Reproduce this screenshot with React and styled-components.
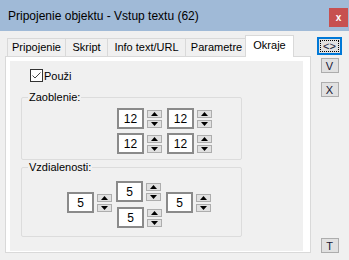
import React from "react";
import styled, { createGlobalStyle } from "styled-components";

const GlobalStyle = createGlobalStyle`
  html, body {
    margin: 0;
    padding: 0;
    background: #f0f0f0;
  }
  body {
    font-family: "Liberation Sans", Arial, sans-serif;
    font-size: 11px;
    color: #000;
  }
`;

const Window = styled.div`
  width: 349px;
  height: 260px;
  background: #f0f0f0;
  display: flex;
  flex-direction: column;
  overflow: hidden;
`;

const TitleBar = styled.div`
  height: 31px;
  flex-shrink: 0;
  background: #a0bad7;
  display: flex;
  align-items: flex-start;
`;

const Title = styled.div`
  flex: 1;
  padding: 9px 0 0 8px;
  font-size: 12px;
  line-height: 14px;
  color: #000;
`;

const CloseButton = styled.div`
  width: 19px;
  height: 19px;
  margin: 8px 1px 0 0;
  background: #c75050;
  color: #fff;
  font-weight: bold;
  font-size: 10px;
  display: flex;
  align-items: center;
  justify-content: center;
`;

const Body = styled.div`
  flex: 1;
  display: flex;
  padding: 5px 0 7px 5px;
`;

const TabControl = styled.div`
  width: 306px;
  display: flex;
  flex-direction: column;
`;

const TabStrip = styled.div`
  height: 21px;
  display: flex;
  align-items: flex-end;
  padding-left: 2px;
  margin-bottom: -1px;
  position: relative;
  z-index: 1;
`;

const Tab = styled.div`
  box-sizing: border-box;
  width: ${p => p.$w}px;
  height: ${p => (p.$active ? 22 : 19)}px;
  margin-left: ${p => (p.$active ? -2 : 0)}px;
  margin-right: -1px;
  padding-bottom: ${p => (p.$active ? 3 : 1)}px;
  border: 1px solid #d9d9d9;
  border-bottom: ${p => (p.$active ? "none" : "1px solid #d9d9d9")};
  background: ${p => (p.$active ? "#fff" : "#f0f0f0")};
  display: flex;
  align-items: center;
  justify-content: center;
  white-space: nowrap;
  position: relative;
  z-index: ${p => (p.$active ? 2 : 1)};
`;

const Panel = styled.div`
  flex: 1;
  border: 1px solid #d9d9d9;
  background: #fff;
  padding: 4px 7px 1px 4px;
  display: flex;
`;

const Page = styled.div`
  flex: 1;
  background: #f0f0f0;
  padding: 8px 0 0 11px;
  display: flex;
  flex-direction: column;
`;

const CheckRow = styled.label`
  display: flex;
  align-items: center;
  gap: 1px;
  margin-left: 9px;
  height: 13px;
`;

const CheckBox = styled.span`
  box-sizing: border-box;
  width: 13px;
  height: 13px;
  border: 1px solid #333;
  background: #fff;
  display: flex;
  align-items: center;
  justify-content: center;
`;

const Group = styled.fieldset`
  box-sizing: border-box;
  width: 221px;
  margin: ${p => p.$top}px 0 0 0;
  padding: 0;
  min-width: 0;
  border: 1px solid #dcdcdc;
  border-radius: 2px;
`;

const Legend = styled.legend`
  margin-left: 6px;
  padding: 0 1px;
  line-height: 14px;
  font-size: 11px;
`;

const CornerGrid = styled.div`
  display: grid;
  grid-template-columns: auto auto;
  justify-content: start;
  column-gap: 5px;
  row-gap: 4px;
  padding: 4px 0 5px 95px;
`;

const DistanceRow = styled.div`
  display: flex;
  align-items: flex-start;
  gap: 4px;
  padding: 7px 0 8px 45px;
`;

const SideCell = styled.div`
  margin-top: 11px;
`;

const MiddleColumn = styled.div`
  display: flex;
  flex-direction: column;
  gap: 5px;
`;

const SpinWrap = styled.div`
  display: flex;
  align-items: center;
  gap: 3px;
  margin-left: ${p => p.$shift || 0}px;
`;

const NumberBox = styled.div`
  box-sizing: border-box;
  width: 27px;
  height: 21px;
  border: 2px solid #8a8a8a;
  background: #fff;
  display: flex;
  align-items: center;
  justify-content: center;
  font-size: 12px;
`;

const SpinButtons = styled.div`
  display: flex;
  flex-direction: column;
  gap: 2px;
`;

const SpinButton = styled.div`
  box-sizing: border-box;
  width: 15px;
  height: 8px;
  border: 1px solid #adadad;
  background: #e1e1e1;
  display: flex;
  align-items: center;
  justify-content: center;
`;

const SideBar = styled.div`
  width: 25px;
  margin-left: 6px;
  padding-top: 1px;
  display: flex;
  flex-direction: column;
  align-items: center;
`;

const SideButton = styled.div`
  box-sizing: border-box;
  width: ${p => (p.$focused ? 25 : 18)}px;
  height: ${p => (p.$focused ? 18 : 15)}px;
  margin-top: ${p => p.$gap || 0}px;
  border: ${p => (p.$focused ? "2px solid #0078d7" : "1px solid #adadad")};
  background: #e1e1e1;
  display: flex;
  align-items: center;
  justify-content: center;
  font-size: 11px;
  color: #141432;
`;

const FocusRing = styled.span`
  box-sizing: border-box;
  width: 19px;
  height: 12px;
  border: 1px dotted #000;
  display: flex;
  align-items: center;
  justify-content: center;
  line-height: 10px;
`;

const Spacer = styled.div`
  flex: 1;
`;

function Arrow({ down }) {
  return (
    <svg width="7" height="4" viewBox="0 0 7 4">
      <polygon points={down ? "0,0 7,0 3.5,4" : "0,4 7,4 3.5,0"} fill="#000" />
    </svg>
  );
}

function Spinner({ value, shift }) {
  return (
    <SpinWrap $shift={shift}>
      <NumberBox>{value}</NumberBox>
      <SpinButtons>
        <SpinButton><Arrow /></SpinButton>
        <SpinButton><Arrow down /></SpinButton>
      </SpinButtons>
    </SpinWrap>
  );
}

const tabs = [
  { label: "Pripojenie", w: 59 },
  { label: "Skript", w: 43 },
  { label: "Info text/URL", w: 79 },
  { label: "Parametre", w: 63 },
  { label: "Okraje", w: 49, active: true },
];

export default function App() {
  return (
    <>
      <GlobalStyle />
      <Window>
        <TitleBar>
          <Title>Pripojenie objektu - Vstup textu (62)</Title>
          <CloseButton>x</CloseButton>
        </TitleBar>
        <Body>
          <TabControl>
            <TabStrip>
              {tabs.map(t => (
                <Tab key={t.label} $w={t.w} $active={t.active}>{t.label}</Tab>
              ))}
            </TabStrip>
            <Panel>
              <Page>
                <CheckRow>
                  <CheckBox>
                    <svg width="11" height="11" viewBox="0 0 11 11">
                      <polyline points="1.5,5.5 4,8 9.5,2.5" fill="none" stroke="#444" strokeWidth="1" />
                    </svg>
                  </CheckBox>
                  Použi
                </CheckRow>
                <Group $top={8}>
                  <Legend>Zaoblenie:</Legend>
                  <CornerGrid>
                    <Spinner value="12" />
                    <Spinner value="12" />
                    <Spinner value="12" />
                    <Spinner value="12" />
                  </CornerGrid>
                </Group>
                <Group $top={0}>
                  <Legend>Vzdialenosti:</Legend>
                  <DistanceRow>
                    <SideCell><Spinner value="5" /></SideCell>
                    <MiddleColumn>
                      <Spinner value="5" />
                      <Spinner value="5" shift={1} />
                    </MiddleColumn>
                    <SideCell><Spinner value="5" /></SideCell>
                  </DistanceRow>
                </Group>
              </Page>
            </Panel>
          </TabControl>
          <SideBar>
            <SideButton $focused><FocusRing>&lt;&gt;</FocusRing></SideButton>
            <SideButton $gap={3}>V</SideButton>
            <SideButton $gap={9}>X</SideButton>
            <Spacer />
            <SideButton>T</SideButton>
          </SideBar>
        </Body>
      </Window>
    </>
  );
}
